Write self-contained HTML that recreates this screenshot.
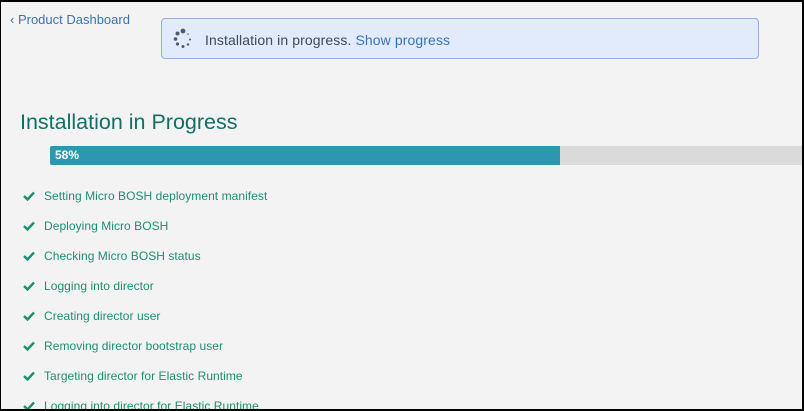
<!DOCTYPE html>
<html><head><style>
body{margin:0;width:804px;height:411px;overflow:hidden;background:#000;font-family:"Liberation Sans",sans-serif;}
.pg{position:absolute;left:1px;top:2px;width:801px;height:407px;background:#f3f3f3;overflow:hidden;}
.back{position:absolute;left:9px;top:10px;font-size:13px;color:#3b73b0;}
.alert{position:absolute;left:160px;top:16px;width:596px;height:39px;border:1px solid #95afd9;border-radius:4px;background:#e1ebfb;}
.alert .t{position:absolute;left:43px;top:13px;font-size:14px;letter-spacing:0.1px;color:#3d4a5a;}
.alert .t span{color:#3b73b0;}
h1{position:absolute;left:19px;top:108px;margin:0;font-weight:normal;font-size:21.5px;color:#116f66;}
.bar{position:absolute;left:49px;top:144px;width:760px;height:19px;background:#dadada;}
.fill{position:absolute;left:0;top:0;width:510px;height:19px;background:#2e96b0;border-radius:2px 0 0 2px;color:#fff;font-size:12px;font-weight:bold;line-height:19px;padding-left:5px;box-sizing:border-box;}
.it{position:absolute;left:43px;font-size:12px;letter-spacing:0.05px;color:#1d8e72;}
.ck{position:absolute;left:22px;width:12px;height:10px;}
</style></head><body><div class="pg">
<div class="back">‹ Product Dashboard</div>
<div class="alert">
<svg style="position:absolute;left:10px;top:8px" width="24" height="24" viewBox="0 0 24 24" fill="#4f5a6a">
<circle cx="11" cy="4" r="2.4"/><circle cx="5.5" cy="6.5" r="2"/><circle cx="3.5" cy="12" r="1.8"/><circle cx="5.5" cy="17" r="1.6"/><circle cx="11" cy="19.5" r="1.5"/><circle cx="16" cy="17.5" r="1.2"/><circle cx="18" cy="12.5" r="1"/><circle cx="16" cy="7" r="0.8"/></svg>
<div class="t">Installation in progress. <span>Show progress</span></div>
</div>
<h1>Installation in Progress</h1>
<div class="bar"><div class="fill">58%</div></div>
<svg class="ck" style="top:189px" viewBox="0 0 12 10"><path d="M1 5l3.5 3.5L11 1.5" stroke="#1d8e72" stroke-width="2.4" fill="none"/></svg><div class="it" style="top:187px">Setting Micro BOSH deployment manifest</div>
<svg class="ck" style="top:219px" viewBox="0 0 12 10"><path d="M1 5l3.5 3.5L11 1.5" stroke="#1d8e72" stroke-width="2.4" fill="none"/></svg><div class="it" style="top:217px">Deploying Micro BOSH</div>
<svg class="ck" style="top:249px" viewBox="0 0 12 10"><path d="M1 5l3.5 3.5L11 1.5" stroke="#1d8e72" stroke-width="2.4" fill="none"/></svg><div class="it" style="top:247px">Checking Micro BOSH status</div>
<svg class="ck" style="top:279px" viewBox="0 0 12 10"><path d="M1 5l3.5 3.5L11 1.5" stroke="#1d8e72" stroke-width="2.4" fill="none"/></svg><div class="it" style="top:277px">Logging into director</div>
<svg class="ck" style="top:309px" viewBox="0 0 12 10"><path d="M1 5l3.5 3.5L11 1.5" stroke="#1d8e72" stroke-width="2.4" fill="none"/></svg><div class="it" style="top:307px">Creating director user</div>
<svg class="ck" style="top:339px" viewBox="0 0 12 10"><path d="M1 5l3.5 3.5L11 1.5" stroke="#1d8e72" stroke-width="2.4" fill="none"/></svg><div class="it" style="top:337px">Removing director bootstrap user</div>
<svg class="ck" style="top:369px" viewBox="0 0 12 10"><path d="M1 5l3.5 3.5L11 1.5" stroke="#1d8e72" stroke-width="2.4" fill="none"/></svg><div class="it" style="top:367px">Targeting director for Elastic Runtime</div>
<svg class="ck" style="top:399px" viewBox="0 0 12 10"><path d="M1 5l3.5 3.5L11 1.5" stroke="#1d8e72" stroke-width="2.4" fill="none"/></svg><div class="it" style="top:397px">Logging into director for Elastic Runtime</div>
</div></body></html>
